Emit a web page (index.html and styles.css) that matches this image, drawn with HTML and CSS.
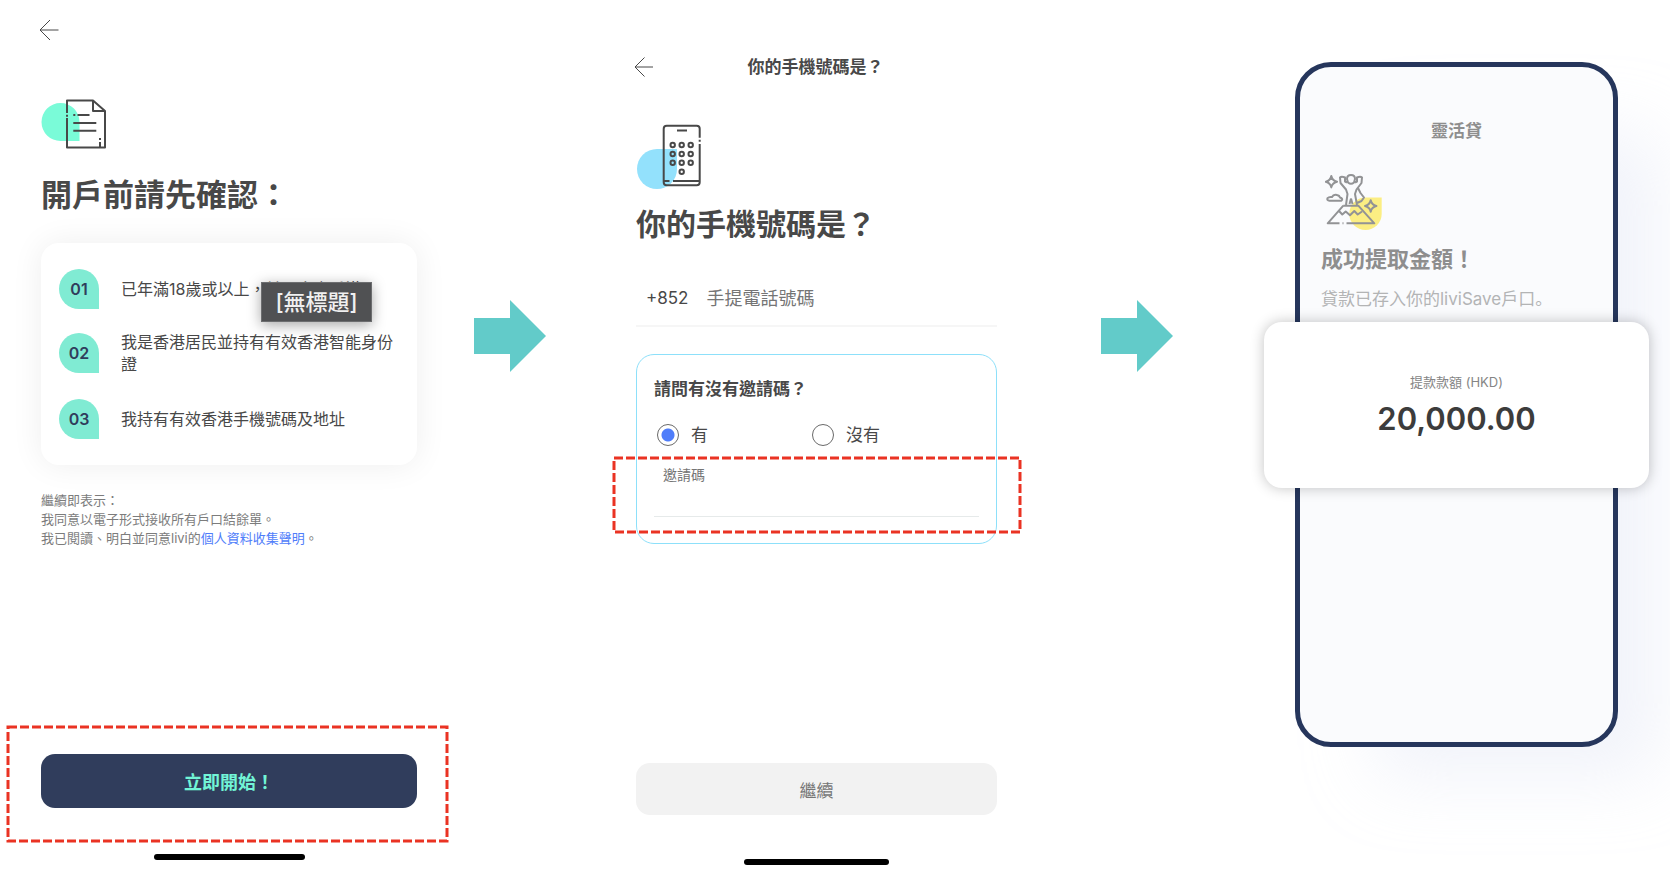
FILE: index.html
```html
<!DOCTYPE html>
<html lang="zh-Hant-HK">
<head>
<meta charset="utf-8">
<meta name="viewport" content="width=device-width, initial-scale=1">
<title>開戶流程</title>
<link rel="stylesheet" href="styles.css">
</head>
<body>
<main class="flow">

  <section class="screen screen-confirm">
    <button class="back" type="button" aria-label="返回">
      <svg width="20" height="22" viewBox="0 0 20 22"><path d="M19.500 11H1M11 1 1 11l10 10"/></svg>
    </button>
    <svg class="art art-doc" width="66" height="52" viewBox="0 0 66 52">
      <path class="mint" d="M19.500 5A19 19 0 0 0 19.500 43H38.500V24A19 19 0 0 0 19.500 5Z"/>
      <path class="line" d="M26 15V2.500H52L64 13V49.500H26V20M26 16.800V18.800M52 2.500V13H64M32.300 17H34.300M36.500 17H48.500M32.300 25H55.300M32.300 32.700H55.300M59 40V42M59 44V49"/>
    </svg>
    <h1 class="title title-confirm">開戶前請先確認：</h1>
    <div class="card">
      <ol class="steps">
        <li><span class="badge">01</span><span>已年滿18歲或以上，<span class="masked">並現身處香港<span class="tag">[無標題]</span></span></span></li>
        <li><span class="badge">02</span><span>我是香港居民並持有有效香港智能身份證</span></li>
        <li><span class="badge">03</span><span>我持有有效香港手機號碼及地址</span></li>
      </ol>
    </div>
    <p class="terms">繼續即表示：<br>我同意以電子形式接收所有戶口結餘單。<br>我已閱讀、明白並同意livi的<a href="#privacy">個人資料收集聲明</a>。</p>
    <div class="cta cta-start">
      <button class="btn btn-primary" type="button">立即開始！</button>
      <svg class="mark"><rect/></svg>
    </div>
    <div class="home home-wide"></div>
  </section>

  <div class="step-arrow">
    <svg width="72" height="72" viewBox="0 0 72 72"><path d="M0 18H36V0L72 36 36 72V54H0Z"/></svg>
  </div>

  <section class="screen screen-phone">
    <header class="bar">
      <button class="back" type="button" aria-label="返回">
        <svg width="20" height="20" viewBox="0 0 20 20"><path d="M19 10H1M10.500.5 1 10l9.500 9.500"/></svg>
      </button>
      <span class="bar-title">你的手機號碼是？</span>
    </header>
    <svg class="art art-phone" width="66" height="66" viewBox="0 0 66 66">
      <path class="sky" d="M21 25A20 20 0 1 0 41 45V25Z"/>
      <path class="line" d="M63.700 13.700V4.700Q63.700 1.700 60.700 1.700H30.700Q27.700 1.700 27.700 4.700V58.300Q27.700 61.300 30.700 61.300H60.700Q63.700 61.300 63.700 58.300V20M63.700 15.800V17.800M41 6.500H51M28 57H33.500M37 57H63.500"/>
      <g class="line">
        <circle cx="36.700" cy="21" r="2.200"/><circle cx="45.700" cy="21" r="2.200"/><circle cx="54.700" cy="21" r="2.200"/>
        <circle cx="36.700" cy="30" r="2.200"/><circle cx="45.700" cy="30" r="2.200"/><circle cx="54.700" cy="30" r="2.200"/>
        <circle cx="36.700" cy="38.700" r="2.200"/><circle cx="45.700" cy="38.700" r="2.200"/><circle cx="54.700" cy="38.700" r="2.200"/>
        <circle cx="45.700" cy="47.700" r="2.200"/>
      </g>
    </svg>
    <h1 class="title title-phone">你的手機號碼是？</h1>
    <div class="tel">
      <label for="tel">+852</label>
      <input id="tel" type="tel" placeholder="手提電話號碼">
    </div>
    <fieldset class="invite">
      <div class="question">請問有沒有邀請碼？</div>
      <div class="choices">
        <label><input type="radio" name="invite" checked>有</label>
        <label><input type="radio" name="invite">沒有</label>
      </div>
      <div class="field">
        <label for="code">邀請碼</label>
        <input id="code" type="text">
        <svg class="mark"><rect/></svg>
      </div>
    </fieldset>
    <div class="cta">
      <button class="btn btn-muted" type="button">繼續</button>
    </div>
    <div class="home"></div>
  </section>

  <div class="step-arrow">
    <svg width="72" height="72" viewBox="0 0 72 72"><path d="M0 18H36V0L72 36 36 72V54H0Z"/></svg>
  </div>

  <section class="stage">
    <div class="device">
      <div class="device-title">靈活貸</div>
      <svg class="art art-peak" width="58" height="58" viewBox="0 0 58 58">
        <path class="sun" d="M40.500 24.500A16.200 16.200 0 1 0 56.700 40.700V24.500Z"/>
        <path class="line" d="M18.300 32.700H33.300L49.300 50.300H21.500M17.500 50.300H18.500M14.500 50.300H2.700L18.300 32.700M14 38 17.300 41.500 20.700 38.500 25 42.300 29.300 38 32.700 41.500 37 38.500"/>
        <path class="line" d="M6.300 3Q7.300 7.700 12 8.700 7.300 9.700 6.300 14.400 5.300 9.700.8 8.700 5.300 7.700 6.300 3ZM45.700 27.300Q46.700 32 51.400 33 46.700 34 45.700 38.700 44.700 34 40 33 44.700 32 45.700 27.300Z"/>
        <path class="line" d="M4.500 27.700Q1.500 27.500 2.500 25.200 4 23.500 7 24 8.500 21 12 22 14.500 22.500 15 24.500 18.500 25.500 16.500 27.700Z"/>
        <path class="line" d="M22 6Q22 2 26 2 30 2 30 6L29 9.500Q26 12 23 9.500ZM22 9.500 20 8.500V4.500Q16.500 3 15 4.500L15.500 10 21 16.500 22.500 21 21 32M30 9.500 32 8.500V4.500Q35.500 3 37 4.500L36.500 10 31.500 16.500 30 21 32 32M26 25.500 24.500 31M26 25.500 27.500 31M33 15 35.500 20 39 24.500 36.500 28 32 30"/>
      </svg>
      <h2 class="device-heading">成功提取金額！</h2>
      <p class="device-note" lang="zh-Hans">貸款已存入你的liviSave戶口。</p>
      <div class="amount">
        <div class="amount-label">提款款額 (HKD)</div>
        <div class="amount-value">20,000.00</div>
      </div>
    </div>
  </section>

</main>
</body>
</html>
```
FILE: styles.css
```css
* { box-sizing: border-box; }

body {
  margin: 0;
  background: #fff;
  color: #484848;
  font-family: "Inter", "Noto Sans CJK TC", sans-serif;
  overflow-x: hidden;
}

button, input { font: inherit; color: inherit; }
h1, h2, p, ol, fieldset { margin: 0; padding: 0; }

.flow {
  display: grid;
  grid-template-columns: 457fr 106fr 507fr 134fr 466fr;
  min-height: 100vh;
}

.screen {
  display: flex;
  flex-direction: column;
}
.screen-confirm { padding: 19px 40px 18px 41px; }
.screen-phone { padding: 57px 73px 13px; }

.back {
  display: block;
  align-self: flex-start;
  margin-left: -2px;
  padding: 0;
  border: 0;
  background: none;
}
.back svg { display: block; fill: none; stroke: #484848; stroke-width: 1; }

.art { display: block; flex: none; }
.art .line { fill: none; stroke: #484848; stroke-width: 2; stroke-linejoin: round; }
.mint { fill: #7afbd8; }
.sky { fill: #93e1fc; }
.sun { fill: #fbee83; }
.art-doc { margin-top: 57px; }
.art-phone { margin-top: 47px; }

.title { font-weight: 700; line-height: 40px; white-space: nowrap; }
.title-confirm { margin-top: 25px; font-size: 31px; }
.title-phone { margin-top: 14px; font-size: 30px; }

.card {
  margin-top: 28px;
  padding: 26px 18px;
  border-radius: 18px;
  background: #fff;
  box-shadow: 0 0 32px rgba(0, 0, 0, 0.07);
}
.steps {
  display: flex;
  flex-direction: column;
  gap: 22px;
  list-style: none;
  font-size: 16px;
  line-height: 22px;
}
.steps li {
  display: grid;
  grid-template-columns: 40px 1fr;
  column-gap: 22px;
  align-items: center;
}
.steps li:last-child { margin-top: 2px; }
.badge {
  height: 40px;
  border-radius: 20px 20px 0 20px;
  background: #80ebd3;
  color: #303d5c;
  font-weight: 600;
  line-height: 41px;
  text-align: center;
}
.masked { position: relative; white-space: nowrap; }
.tag {
  position: absolute;
  top: 3px;
  left: -4px;
  padding: 0 13px;
  border: 1px solid #6c6d6f;
  background: #505153;
  color: #f0f0f0;
  box-shadow: 0 3px 14px rgba(0, 0, 0, 0.35);
  font-size: 22px;
  font-weight: 500;
  line-height: 38px;
}

.terms {
  margin-top: 26px;
  color: #7c7c7c;
  font-size: 13px;
  line-height: 19px;
}
.terms a { color: #4f7dfa; text-decoration: none; }

.cta { position: relative; margin-top: auto; }
.btn {
  display: block;
  width: 100%;
  padding: 0;
  border: 0;
  border-radius: 14px;
}
.btn-primary {
  height: 54px;
  background: #303d5c;
  color: #72f5d6;
  font-size: 18px;
  font-weight: 700;
}
.btn-muted {
  height: 52px;
  background: #f2f2f2;
  color: #757575;
  font-size: 17px;
}

.mark { position: absolute; overflow: visible; pointer-events: none; }
.mark rect {
  x: 1px;
  y: 1px;
  width: calc(100% - 2px);
  height: calc(100% - 2px);
  fill: none;
  stroke: #ea3323;
  stroke-width: 3;
  stroke-dasharray: 9 3;
}
.cta-start .mark {
  top: -28px;
  left: -34px;
  width: calc(100% + 65px);
  height: calc(100% + 62px);
}
.field .mark {
  top: -8px;
  left: -41px;
  width: calc(100% + 83px);
  height: calc(100% + 24px);
}

.home {
  width: 145px;
  height: 6px;
  margin: 44px auto 0;
  border-radius: 3px;
  background: #000;
}
.home-wide { width: 151px; margin-top: 46px; }

.step-arrow {
  display: flex;
  justify-content: center;
  align-items: flex-start;
  padding-top: 300px;
}
.step-arrow path { fill: #62cbc9; }

.bar {
  display: grid;
  grid-template-columns: 20px 1fr 22px;
  align-items: center;
}
.bar-title {
  font-size: 17px;
  font-weight: 700;
  line-height: 20px;
  text-align: center;
}

.tel {
  display: flex;
  align-items: center;
  gap: 18px;
  margin-top: 27px;
  padding-left: 10px;
  border-bottom: 2px solid #f6f6f6;
  font-size: 18px;
}
.tel label { font-size: 17px; }
.tel input {
  flex: 1;
  min-width: 0;
  height: 54px;
  padding: 0;
  border: 0;
  outline: 0;
  background: none;
}
.tel input::placeholder { color: #757575; opacity: 1; }

.invite {
  min-width: 0;
  margin-top: 27px;
  padding: 22px 17px 26px;
  border: 1px solid #8de0fa;
  border-radius: 18px;
}
.question { font-size: 17px; font-weight: 700; line-height: 24px; }
.choices {
  display: flex;
  gap: 104px;
  margin-top: 22px;
  padding-left: 3px;
  font-size: 17px;
  line-height: 24px;
}
.choices label { display: flex; align-items: center; gap: 12px; }
.choices input {
  appearance: none;
  width: 22px;
  height: 22px;
  margin: 0;
  border: 1px solid #6a6a6a;
  border-radius: 50%;
}
.choices input:checked {
  background: radial-gradient(circle, #4f7dfa 6px, transparent 7px);
}
.field { position: relative; margin-top: 18px; font-size: 14px; line-height: 20px; }
.field label { display: block; padding-left: 9px; color: #757575; }
.field input {
  display: block;
  width: 100%;
  height: 32px;
  padding: 0 9px;
  border: 0;
  border-bottom: 1px solid #e6eaea;
  outline: 0;
  background: none;
}

.stage { padding: 62px 52px 131px 91px; }
.device {
  display: flex;
  flex-direction: column;
  height: 100%;
  min-height: 640px;
  border: 5px solid #26365c;
  border-radius: 36px;
  background: #fafbfd;
  box-shadow: 60px 50px 70px -20px rgba(215, 223, 242, 0.36);
  color: #8e8e8e;
  font-family: "Inter", "Noto Sans CJK SC", sans-serif;
}
.device-title {
  margin-top: 52px;
  font-size: 17px;
  font-weight: 700;
  line-height: 24px;
  text-align: center;
}
.art-peak { margin: 30px 0 0 25px; }
.art-peak .line { stroke: #929395; stroke-width: 2; }
.device-heading {
  margin: 12px 21px 0;
  font-size: 22px;
  font-weight: 700;
  line-height: 32px;
}
.device-note {
  margin: 12px 21px 0;
  color: #b3b4b5;
  font-size: 17px;
  line-height: 24px;
  white-space: nowrap;
}
.amount {
  margin: 11px -36px 0;
  padding: 48px 0;
  border-radius: 18px;
  background: #fff;
  box-shadow: 0 0 14px rgba(0, 0, 0, 0.24);
  text-align: center;
}
.amount-label { color: #858585; font-size: 13px; line-height: 24px; }
.amount-value {
  margin-top: 4px;
  color: #3c3c3c;
  font-size: 31px;
  font-weight: 600;
  line-height: 42px;
}
```
